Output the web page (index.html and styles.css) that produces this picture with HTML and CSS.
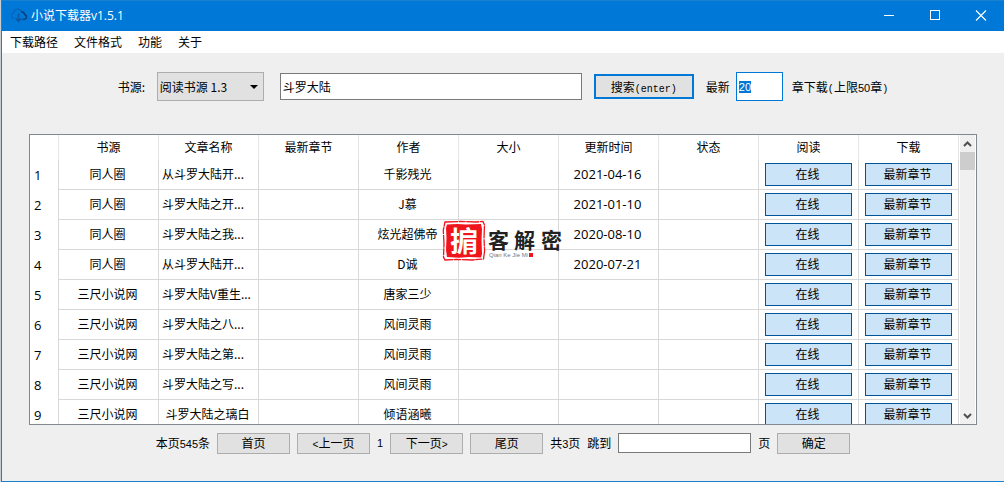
FILE: index.html
```html
<!DOCTYPE html>
<html lang="zh-CN">
<head>
<meta charset="utf-8">
<title>小说下载器v1.5.1</title>
<link rel="stylesheet" href="styles.css">
</head>
<body>
<div class="window">
  <header class="titlebar">
    <svg class="app-icon" width="18" height="16" viewBox="0 0 18 16" fill="none" stroke="#0a3f7c" stroke-linecap="round">
      <path stroke="#0a62b2" stroke-width="1.2" d="M3.500 10.500C.5 10 .5 5.500 3.500 5C4 .8 9.500-.3 11.500 3.500"/>
      <path stroke-width="1.4" d="M11.500 3.700C14 4 14.500 5.500 14.500 6.500C17.500 7.500 17 11.500 13 11.500"/>
      <path stroke="#0a58a2" stroke-width="1.6" d="M8.500 6V13M6 10.800L8.500 13.300L11 10.800"/>
    </svg>
    <h1 class="title">小说下载器v1.5.1</h1>
    <div class="controls">
      <button class="control" aria-label="最小化"><svg width="12" height="12" viewBox="0 0 12 12"><path d="M1 5.500H11" stroke="#fff"/></svg></button>
      <button class="control" aria-label="最大化"><svg width="12" height="12" viewBox="0 0 12 12"><rect x="1.500" y=".5" width="9" height="9" fill="none" stroke="#fff"/></svg></button>
      <button class="control" aria-label="关闭"><svg width="12" height="12" viewBox="0 0 12 12"><path d="M1 .5L11 10.500M11 .5L1 10.500" stroke="#fff" stroke-width="1.100"/></svg></button>
    </div>
  </header>
  <nav class="menubar">
    <button class="menu">下载路径</button>
    <button class="menu">文件格式</button>
    <button class="menu">功能</button>
    <button class="menu">关于</button>
  </nav>
  <form class="search" onsubmit="return false">
    <label class="source-label" for="source">书源:</label>
    <select class="source" id="source"><option>阅读书源 1.3</option></select>
    <input class="field keyword" type="text" value="斗罗大陆" aria-label="书名">
    <button class="button primary">搜索<span class="mono">(enter)</span></button>
    <label class="latest-label" for="latest">最新</label>
    <input class="field latest" id="latest" type="text" value="20">
    <span class="limit">章下载<span class="mono">(</span>上限<span class="num">50</span>章<span class="mono">)</span></span>
  </form>
  <main class="results">
    <div class="viewport">
      <table class="books">
        <colgroup><col class="index-col"><col span="9"></colgroup>
        <thead>
          <tr><th></th><th>书源</th><th>文章名称</th><th>最新章节</th><th>作者</th><th>大小</th><th>更新时间</th><th>状态</th><th>阅读</th><th>下载</th></tr>
        </thead>
        <tbody>
          <tr><th>1</th><td>同人圈</td><td class="elided">从斗罗大陆开...</td><td></td><td>千影残光</td><td></td><td class="date">2021-04-16</td><td></td><td><button class="action">在线</button></td><td><button class="action">最新章节</button></td></tr>
          <tr><th>2</th><td>同人圈</td><td class="elided">斗罗大陆之开...</td><td></td><td>J慕</td><td></td><td class="date">2021-01-10</td><td></td><td><button class="action">在线</button></td><td><button class="action">最新章节</button></td></tr>
          <tr><th>3</th><td>同人圈</td><td class="elided">斗罗大陆之我...</td><td></td><td>炫光超佛帝</td><td></td><td class="date">2020-08-10</td><td></td><td><button class="action">在线</button></td><td><button class="action">最新章节</button></td></tr>
          <tr><th>4</th><td>同人圈</td><td class="elided">从斗罗大陆开...</td><td></td><td>D诚</td><td></td><td class="date">2020-07-21</td><td></td><td><button class="action">在线</button></td><td><button class="action">最新章节</button></td></tr>
          <tr><th>5</th><td>三尺小说网</td><td class="elided">斗罗大陆V重生...</td><td></td><td>唐家三少</td><td></td><td></td><td></td><td><button class="action">在线</button></td><td><button class="action">最新章节</button></td></tr>
          <tr><th>6</th><td>三尺小说网</td><td class="elided">斗罗大陆之八...</td><td></td><td>风间灵雨</td><td></td><td></td><td></td><td><button class="action">在线</button></td><td><button class="action">最新章节</button></td></tr>
          <tr><th>7</th><td>三尺小说网</td><td class="elided">斗罗大陆之第...</td><td></td><td>风间灵雨</td><td></td><td></td><td></td><td><button class="action">在线</button></td><td><button class="action">最新章节</button></td></tr>
          <tr><th>8</th><td>三尺小说网</td><td class="elided">斗罗大陆之写...</td><td></td><td>风间灵雨</td><td></td><td></td><td></td><td><button class="action">在线</button></td><td><button class="action">最新章节</button></td></tr>
          <tr><th>9</th><td>三尺小说网</td><td>斗罗大陆之璃白</td><td></td><td>倾语涵曦</td><td></td><td></td><td></td><td><button class="action">在线</button></td><td><button class="action">最新章节</button></td></tr>
        </tbody>
      </table>
    </div>
    <div class="scrollbar">
      <svg class="arrow" width="15" height="17" viewBox="0 0 15 17"><path d="M4 11L7.500 7.500L11 11" fill="none" stroke="#505050" stroke-width="2"/></svg>
      <div class="thumb"></div>
      <svg class="arrow" width="15" height="17" viewBox="0 0 15 17"><path d="M4 7L7.500 10.500L11 7" fill="none" stroke="#505050" stroke-width="2"/></svg>
    </div>
  </main>
  <footer class="pager">
    <span>本页<span class="num">545</span>条</span>
    <button class="button page">首页</button>
    <button class="button page"><span class="mono">&lt;</span>上一页</button>
    <span class="num">1</span>
    <button class="button page">下一页<span class="mono">&gt;</span></button>
    <button class="button page">尾页</button>
    <span>共<span class="num">3</span>页</span>
    <label for="jump">跳到</label>
    <input class="field jump" id="jump" type="text">
    <span>页</span>
    <button class="button page">确定</button>
  </footer>
  <svg class="watermark" width="130" height="44" viewBox="0 0 130 44">
    <path d="M3 2L18 1.500L34 2L41 1.500L42.500 5L42 18L42.600 31L41.500 39L30 40L14 39.500L3 40L1.500 37L2 24L1.300 10Z" fill="#fff" stroke="#f0141c" stroke-width="1.300" stroke-dasharray="13 .7 7 .5"/>
    <path d="M5 4.500L15 4L24 4.600L39 4L40 9L39.500 20L40 34L39 37.500L27 37L17 37.800L5 37L4 30L4.500 18L4 8Z" fill="#f0141c"/>
    <text class="seal" x="22" y="32">掮</text>
    <text class="brand" x="46" y="28">客</text>
    <text class="brand" x="72" y="28">解</text>
    <text class="brand" x="99" y="28">密</text>
    <text class="pinyin" x="47" y="37">Qian Ke Jie Mi</text>
    <rect x="87" y="33" width="4" height="4" fill="#f0141c"/>
  </svg>
</div>
<script src="main.js"></script>
</body>
</html>
```

FILE: styles.css
```css
* { box-sizing: border-box; }

body {
  margin: 0;
  padding-left: 1px;
  background: #c9ced3;
  color: #000;
  font: 12px/16px "Noto Sans CJK SC", sans-serif;
}

button, input, select {
  margin: 0;
  color: inherit;
  font: inherit;
}

.num, .mono { line-height: 1; }
.num { font-family: "Liberation Sans", sans-serif; font-size: 11px; }
.mono { font-family: "Liberation Mono", monospace; font-size: 10px; }

.window {
  position: relative;
  display: flex;
  flex-direction: column;
  height: 100vh;
  border-left: 1px solid #1a80d0;
  border-bottom: 1px solid #1a80d0;
  background: #efefef;
}

.titlebar {
  display: flex;
  flex: none;
  align-items: center;
  height: 31px;
  padding-left: 8px;
  border-top: 1px solid #1a80d0;
  background: #0078d7;
  color: #fff;
}

.title {
  margin: 0 0 0 3px;
  font: 12px/16px "Open Sans", "Noto Sans CJK SC", sans-serif;
}

.controls { display: flex; margin-left: auto; }

.control {
  display: grid;
  place-items: center;
  width: 46px;
  height: 30px;
  padding: 0;
  border: 0;
  background: none;
}

.menubar {
  display: flex;
  flex: none;
  gap: 16px;
  height: 22px;
  padding: 0 8px;
  background: #fff;
}

.menu { padding: 0; border: 0; background: none; }

.search {
  display: flex;
  flex: none;
  align-items: center;
  justify-content: center;
  height: 67px;
}

.field {
  height: 27px;
  padding: 0 2px;
  border: 1px solid #7a7a7a;
  border-radius: 0;
  outline: 0;
  background: #fff;
}

.source-label { width: 39px; }

.source {
  width: 107px;
  height: 29px;
  padding: 0 2px;
  border: 1px solid #adadad;
  border-radius: 0;
  appearance: none;
  background: url("data:image/svg+xml,%3Csvg xmlns='http://www.w3.org/2000/svg' width='8' height='4'%3E%3Cpath d='M0 0H8L4 4Z'/%3E%3C/svg%3E") no-repeat right 5px center, #e1e1e1;
  font-family: "Noto Sans CJK SC", sans-serif;
}

.keyword { width: 302px; margin: 0 12px 0 16px; }

.button {
  padding: 0;
  border: 1px solid #adadad;
  background: #e1e1e1;
}

.primary { width: 100px; height: 25px; border: 2px solid #0078d7; }

.latest-label { margin: 0 6px 0 12px; }

.latest {
  width: 47px;
  height: 29px;
  border-color: #0078d7;
  caret-color: transparent;
  font: 11px/16px "Liberation Sans", sans-serif;
}

.latest::selection { background: #0078d7; color: #fff; }

.limit { margin-left: 9px; }

.results {
  display: flex;
  flex: 1;
  min-height: 0;
  margin: 14px 27px 0;
  border: 1px solid #828790;
  background: #fff;
}

.viewport { flex: 1; min-width: 0; overflow: hidden; }

.books {
  width: 100%;
  border-spacing: 0;
  table-layout: fixed;
}

.index-col { width: 29px; }

.books th, .books td {
  height: 30px;
  padding: 0 2px 2px 0;
  border-right: 1px solid #d8d8d8;
  border-bottom: 1px solid #d8d8d8;
  font-weight: 400;
  text-align: center;
  white-space: nowrap;
}

.books thead th {
  height: 25px;
  padding: 0 0 2px;
  border-color: #e5e5e5;
  border-bottom: 0;
}

.books tbody th {
  padding: 0 0 0 4px;
  border-bottom: 0;
  font: 13px/16px "Open Sans", sans-serif;
  text-align: left;
}

.books .elided { padding-left: 3px; text-align: left; }
.books .date { font: 13px/16px "Open Sans", sans-serif; }
.books td:has(.action) { padding: 0 6px; }

.action {
  display: block;
  width: 100%;
  height: 23px;
  padding: 0 2px 2px 0;
  border: 1px solid #005499;
  background: #cce4f7;
}

.scrollbar {
  display: flex;
  flex: 0 0 17px;
  flex-direction: column;
  border: solid #fff;
  border-width: 0 1px;
  background: #f0f0f0;
}

.arrow { flex: none; }
.thumb { height: 18px; margin-bottom: auto; background: #cdcdcd; }

.pager {
  display: flex;
  flex: none;
  align-items: center;
  justify-content: center;
  gap: 7px;
  height: 56px;
  padding-bottom: 20px;
}

.page { width: 73px; height: 21px; }
.jump { width: 133px; height: 20px; }

.watermark {
  position: absolute;
  top: 220px;
  left: 440px;
  pointer-events: none;
}

.seal {
  fill: #fff;
  font: 700 28px "Noto Sans CJK SC", sans-serif;
  text-anchor: middle;
}

.brand { fill: #222; font: 700 21px "Noto Sans CJK SC", sans-serif; }
.pinyin { fill: #777; font: 6px "Liberation Sans", sans-serif; }
```

FILE: main.js
```js
const latest = document.getElementById("latest");
latest.focus();
latest.select();
```
